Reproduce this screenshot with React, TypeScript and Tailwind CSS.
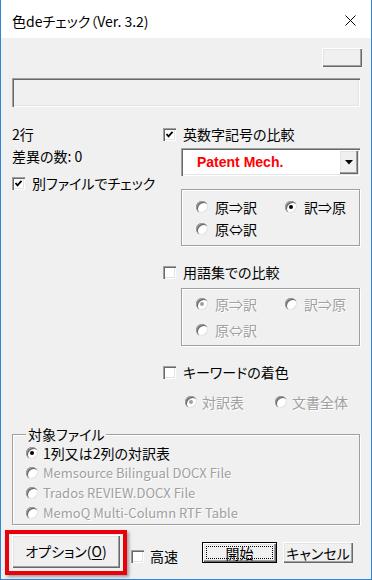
import React from "react";

const raised =
  "bg-[#f0f0f0] shadow-[inset_1px_1px_0_#fff,inset_-1px_-1px_0_#696969,inset_-2px_-2px_0_#a0a0a0,inset_2px_2px_0_#e3e3e3]";
const sunken =
  "shadow-[inset_1px_1px_0_#a0a0a0,inset_2px_2px_0_#696969,inset_-1px_-1px_0_#fff,inset_-2px_-2px_0_#e3e3e3]";
const etched = "border border-[#a0a0a0] shadow-[inset_1px_1px_0_#fff,1px_1px_0_#fff]";
const dim = "text-[#a0a0a0] [text-shadow:1px_1px_0_#fff]";

function Checkbox({ checked = false }: { checked?: boolean }) {
  return (
    <span className={`flex h-[13px] w-[13px] shrink-0 items-center justify-center bg-white ${sunken}`}>
      {checked && (
        <svg width="9" height="9" viewBox="0 0 9 9">
          <polyline points="1.5,4 3.5,6.3 7.5,1.8" fill="none" stroke="#000" strokeWidth="1.8" />
        </svg>
      )}
    </span>
  );
}

function Radio({ checked = false, disabled = false }: { checked?: boolean; disabled?: boolean }) {
  return (
    <span className="flex h-[12px] w-[12px] shrink-0 items-center justify-center rounded-full bg-white shadow-[inset_1px_1px_0_#a0a0a0,inset_2px_2px_0_#696969,inset_-1px_-1px_0_#e3e3e3]">
      {checked && (
        <span className={`h-[4px] w-[4px] rounded-full ${disabled ? "bg-[#a0a0a0]" : "bg-black"}`} />
      )}
    </span>
  );
}

function RadioItem({
  label,
  checked,
  disabled,
  gap = "gap-[7px]",
  width,
}: {
  label: string;
  checked?: boolean;
  disabled?: boolean;
  gap?: string;
  width?: string;
}) {
  return (
    <div className={`flex items-center ${gap} ${width ?? ""}`}>
      <Radio checked={checked} disabled={disabled} />
      <span className={`leading-[16px] ${disabled ? dim : ""}`}>{label}</span>
    </div>
  );
}

function CheckRow({ label, checked, className = "" }: { label: string; checked?: boolean; className?: string }) {
  return (
    <div className={`flex h-[14px] items-center gap-[7px] ${className}`}>
      <Checkbox checked={checked} />
      <span className="leading-[16px]">{label}</span>
    </div>
  );
}

export default function App() {
  return (
    <div className="flex h-[580px] w-[372px] flex-col border-x border-b border-[#2b86d8] bg-[#f0f0f0] font-['Noto_Sans_CJK_JP',sans-serif] text-[14px] text-black [font-feature-settings:'palt']">
      {/* title bar */}
      <div className="flex h-[38px] shrink-0 items-center justify-between bg-white pl-[11px] pr-[15px] pt-[3px]">
        <span className="text-[14px] leading-[20px]">色deチェック（Ver. 3.2)</span>
        <svg width="11" height="11" viewBox="0 0 11 11">
          <path d="M0.5 0.5 L10.5 10.5 M10.5 0.5 L0.5 10.5" stroke="#000" strokeWidth="1" />
        </svg>
      </div>

      <div className="flex flex-col pl-[11px] pr-[11px]">
        <div className="mt-[10px] flex justify-end">
          <button type="button" className={`-mr-[2px] h-[19px] w-[40px] ${raised}`} />
        </div>
        <div className={`mt-[11px] h-[29px] ${sunken}`} />

        {/* two columns */}
        <div className="mt-[20px] flex">
          <div className="flex w-[151px] flex-col">
            <span className="-mt-[1px] leading-[16px]">2行</span>
            <span className="mt-[6px] leading-[16px]">差異の数: 0</span>
            <CheckRow label="別ファイルでチェック" checked className="mt-[12px]" />
          </div>

          <div className="flex flex-1 flex-col">
            <CheckRow label="英数字記号の比較" checked />
            <div className={`ml-[18px] mt-[7px] flex h-[28px] items-center bg-white p-[2px] ${sunken}`}>
              <span className="flex-1 pl-[14px] font-['Liberation_Sans',sans-serif] text-[14px] font-bold text-[#ff0000]">
                Patent Mech.
              </span>
              <span className={`flex h-[24px] w-[19px] items-center justify-center ${raised}`}>
                <svg width="8" height="5" viewBox="0 0 8 5">
                  <path d="M0 0 H8 L4 4.5 Z" fill="#000" />
                </svg>
              </span>
            </div>

            <div className={`ml-[18px] mt-[13px] flex h-[57px] flex-col pl-[14px] pt-[6px] ${etched}`}>
              <div className="flex h-[22px] items-center">
                <RadioItem label="原⇒訳" width="w-[89px]" />
                <RadioItem label="訳⇒原" checked />
              </div>
              <div className="flex h-[22px] items-center">
                <RadioItem label="原⇔訳" />
              </div>
            </div>

            <CheckRow label="用語集での比較" className="mt-[19px]" />

            <div className={`ml-[18px] mt-[9px] flex h-[58px] flex-col pl-[14px] pt-[2px] ${etched}`}>
              <div className="flex h-[26px] items-center">
                <RadioItem label="原⇒訳" checked disabled width="w-[89px]" />
                <RadioItem label="訳⇒原" disabled />
              </div>
              <div className="flex h-[26px] items-center">
                <RadioItem label="原⇔訳" disabled />
              </div>
            </div>

            <CheckRow label="キーワードの着色" className="mt-[19px]" />

            <div className="ml-[22px] mt-[17px] flex h-[12px] items-center">
              <RadioItem label="対訳表" checked disabled gap="gap-[5px]" width="w-[90px]" />
              <RadioItem label="文書全体" disabled gap="gap-[5px]" />
            </div>
          </div>
        </div>

        {/* target file group */}
        <div className={`mt-[26px] flex h-[91px] flex-col pl-[13px] ${etched}`}>
          <span className="-mt-[9px] mb-[1px] self-start bg-[#f0f0f0] pl-[2px] pr-[2px] leading-[16px]">
            対象ファイル
          </span>
          <div className="flex h-[20px] items-center">
            <RadioItem label="1列又は2列の対訳表" checked gap="gap-[5px]" />
          </div>
          <div className="flex h-[20px] items-center text-[13px]">
            <RadioItem label="Memsource Bilingual DOCX File" disabled gap="gap-[5px]" />
          </div>
          <div className="flex h-[20px] items-center text-[13px]">
            <RadioItem label="Trados REVIEW.DOCX File" disabled gap="gap-[5px]" />
          </div>
          <div className="flex h-[20px] items-center text-[13px]">
            <RadioItem label="MemoQ Multi-Column RTF Table" disabled gap="gap-[5px]" />
          </div>
        </div>

        {/* bottom buttons */}
        <div className="mt-[5px] flex items-start">
          <div className="-ml-[7px] border-4 border-[#e8000b] px-[3px] pb-[3px] pt-[1px] shadow-[2px_2px_3px_rgba(0,0,0,0.35)]">
            <button type="button" className={`flex h-[33px] w-[108px] items-center justify-center ${raised}`}>
              オプション(<span className="underline underline-offset-2">O</span>)
            </button>
          </div>
          <div className="ml-[4px] mt-[18px] flex w-[71px] items-center gap-[6px]">
            <Checkbox />
            <span className="leading-[16px]">高速</span>
          </div>
          <button
            type="button"
            className="mt-[12px] flex h-[21px] w-[75px] border border-black"
          >
            <span className={`flex flex-1 p-[3px] ${raised}`}>
              <span className="flex flex-1 items-center justify-center border border-dotted border-black leading-[14px]">
                開始
              </span>
            </span>
          </button>
          <button
            type="button"
            className={`ml-[6px] mt-[12px] flex h-[21px] w-[70px] items-center justify-center leading-[16px] ${raised}`}
          >
            キャンセル
          </button>
        </div>
      </div>
    </div>
  );
}
